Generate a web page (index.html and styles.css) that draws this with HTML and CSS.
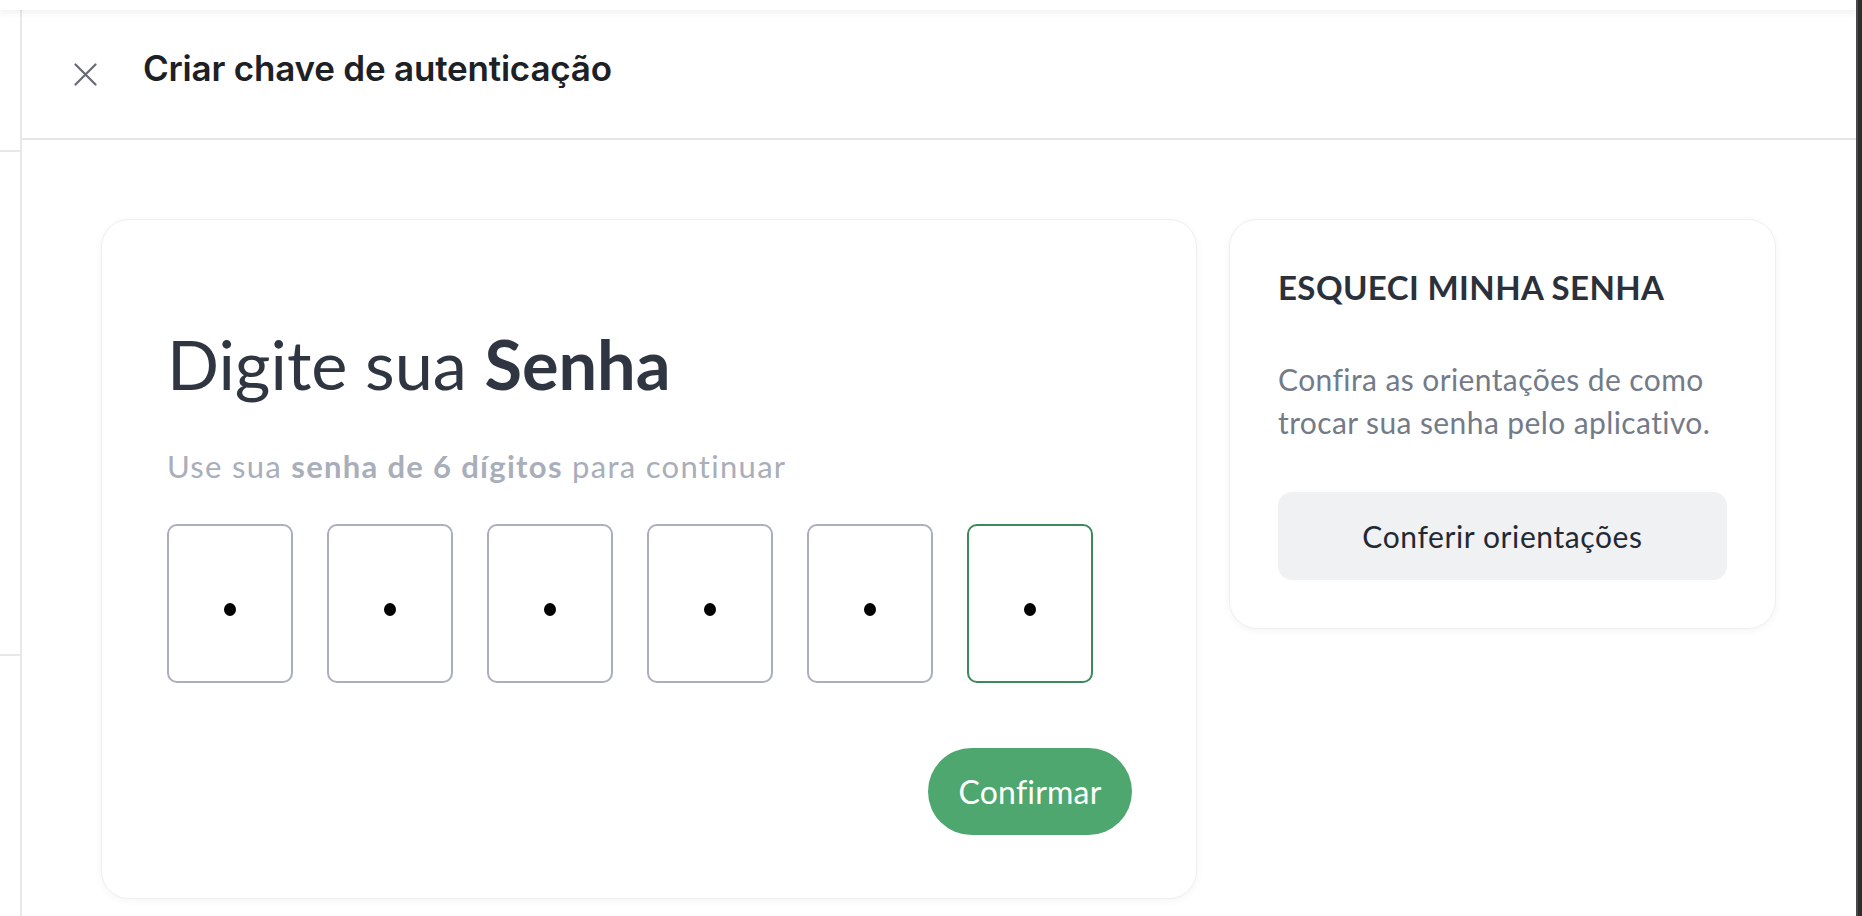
FILE: index.html
```html
<!DOCTYPE html>
<html lang="pt-BR">
<head>
<meta charset="utf-8">
<title>Criar chave de autenticação</title>
<link rel="stylesheet" href="styles.css">
</head>
<body>
<div class="screen">
  <div class="main-col">
    <div class="topbar"></div>
    <div class="body-row">
      <div class="page-strip">
        <div class="strip-gap-1"></div>
        <div class="strip-line"></div>
        <div class="strip-gap-2"></div>
        <div class="strip-line"></div>
      </div>
      <div class="drawer">
        <header class="drawer-header">
          <button class="close-btn" aria-label="Fechar">
            <svg width="23" height="23" viewBox="0 0 23 23" fill="none">
              <path d="M1.5 1.5 L21.5 21.5 M21.5 1.5 L1.5 21.5" stroke="#676a73" stroke-width="2.2" stroke-linecap="round"/>
            </svg>
          </button>
          <h1 class="drawer-title">Criar chave de autenticação</h1>
        </header>
        <div class="drawer-content">
          <section class="card pin-card">
            <h2 class="pin-heading">Digite sua <strong>Senha</strong></h2>
            <p class="pin-sub">Use sua <strong>senha de 6 dígitos</strong> para continuar</p>
            <div class="pin-row">
              <div class="pin-box"><span class="pin-dot"></span></div>
              <div class="pin-box"><span class="pin-dot"></span></div>
              <div class="pin-box"><span class="pin-dot"></span></div>
              <div class="pin-box"><span class="pin-dot"></span></div>
              <div class="pin-box"><span class="pin-dot"></span></div>
              <div class="pin-box active"><span class="pin-dot"></span></div>
            </div>
            <div class="action-row">
              <button class="confirm-btn">Confirmar</button>
            </div>
          </section>
          <aside class="card help-card">
            <h3 class="help-title">ESQUECI MINHA SENHA</h3>
            <p class="help-text">Confira as orientações de como<br>trocar sua senha pelo aplicativo.</p>
            <button class="help-btn">Conferir orientações</button>
          </aside>
        </div>
      </div>
    </div>
  </div>
  <div class="scrollbar"></div>
</div>
</body>
</html>
```

FILE: styles.css
```css
* { box-sizing: border-box; }

html, body {
  margin: 0;
  padding: 0;
  background: #ffffff;
}

body {
  width: 1862px;
  height: 916px;
  overflow: hidden;
  font-family: Lato, "Noto Sans", sans-serif;
}

.screen {
  display: flex;
  width: 1862px;
  height: 916px;
}

.main-col {
  flex: 1;
  display: flex;
  flex-direction: column;
  min-width: 0;
}

.topbar {
  height: 10px;
  flex: none;
  background: #ffffff;
  box-shadow: 0 3px 7px rgba(0, 0, 0, 0.06);
  position: relative;
  z-index: 1;
}

.body-row {
  flex: 1;
  display: flex;
  min-height: 0;
}

.page-strip {
  width: 20px;
  flex: none;
  display: flex;
  flex-direction: column;
  background: #ffffff;
}

.strip-gap-1 { height: 140px; }
.strip-gap-2 { height: 502px; }
.strip-line { height: 2px; background: #e8e8ec; }

.drawer {
  flex: 1;
  display: flex;
  flex-direction: column;
  border-left: 2px solid #e8e8ec;
  background: #ffffff;
}

.drawer-header {
  height: 130px;
  flex: none;
  display: flex;
  align-items: center;
  padding-left: 52px;
  border-bottom: 2px solid #e7e7eb;
}

.close-btn {
  width: 23px;
  height: 23px;
  padding: 0;
  border: 0;
  background: none;
  display: flex;
  margin-top: 1px;
}

.drawer-title {
  margin: 0 0 12px 46px;
  font-family: Inter, "Liberation Sans", sans-serif;
  font-weight: 600;
  font-size: 35px;
  line-height: 42px;
  color: #1d2025;
  letter-spacing: -0.2px;
}

.drawer-content {
  flex: 1;
  display: flex;
  align-items: flex-start;
  gap: 32px;
  padding: 79px 80px 0 79px;
}

.card {
  background: #ffffff;
  border: 1px solid #efeff1;
  border-radius: 28px;
  box-shadow: 0 2px 8px rgba(0, 0, 0, 0.045);
}

.pin-card {
  width: 1096px;
  flex: none;
  padding: 103px 64px 63px 65px;
}

.pin-heading {
  margin: 0;
  font-size: 68.5px;
  line-height: 82px;
  font-weight: 400;
  color: #2f3541;
}

.pin-heading strong { font-weight: 700; }

.pin-sub {
  margin: 46px 0 0;
  font-size: 31px;
  line-height: 31px;
  letter-spacing: 1.3px;
  color: #a8aeba;
}

.pin-sub strong { font-weight: 700; }

.pin-row {
  margin-top: 42px;
  display: flex;
  gap: 34px;
}

.pin-box {
  width: 126px;
  height: 159px;
  border: 2px solid #a9afbb;
  border-radius: 10px;
  display: flex;
  align-items: center;
  justify-content: center;
  padding-top: 11px;
}

.pin-box.active { border-color: #3b8a5b; }

.pin-dot {
  width: 12px;
  height: 13px;
  border-radius: 50%;
  background: #000000;
}

.action-row {
  margin-top: 65px;
  display: flex;
  justify-content: flex-end;
}

.confirm-btn {
  width: 204px;
  height: 87px;
  border: 0;
  border-radius: 44px;
  background: #4ea76f;
  color: #ffffff;
  font-family: Lato, "Noto Sans", sans-serif;
  font-size: 32px;
  letter-spacing: 0.2px;
  padding: 0;
}

.help-card {
  width: 547px;
  flex: none;
  padding: 48px;
}

.help-title {
  margin: 0;
  font-size: 33px;
  line-height: 38px;
  font-weight: 700;
  letter-spacing: 0.4px;
  color: #2b313b;
}

.help-text {
  margin: 52px 0 0;
  font-size: 30px;
  line-height: 43px;
  letter-spacing: 0.4px;
  color: #737b89;
  white-space: nowrap;
}

.help-btn {
  margin-top: 48px;
  width: 100%;
  height: 88px;
  border: 0;
  border-radius: 14px;
  background: #f0f1f3;
  color: #232933;
  font-family: Lato, "Noto Sans", sans-serif;
  font-size: 30px;
  letter-spacing: 0.6px;
  padding: 0;
  display: block;
}

.scrollbar {
  width: 6px;
  flex: none;
  background: #2e2e2e;
  border-left: 2px solid #4a4a4a;
}
```
